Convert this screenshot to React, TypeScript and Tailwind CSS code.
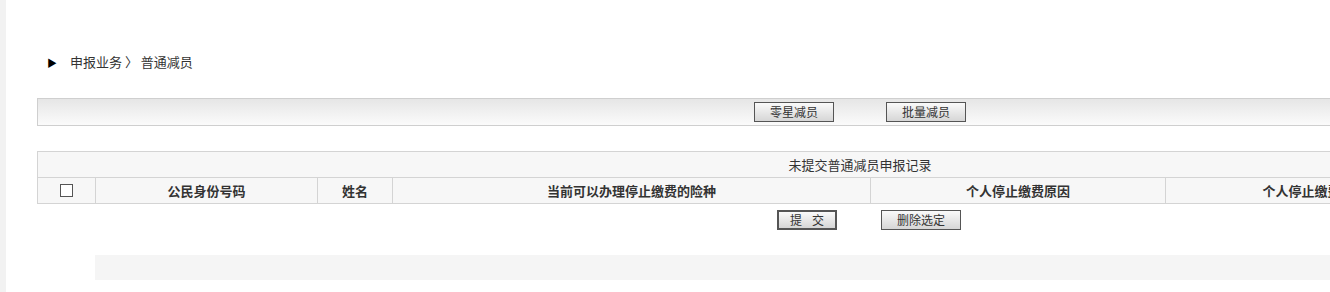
import React from 'react';

const font = { fontFamily: '"Noto Sans CJK SC", "Liberation Sans", sans-serif' };

const btn =
  'h-[20px] border border-[#555] bg-gradient-to-b from-[#fafafa] to-[#d6d6d6] text-[12px] leading-[18px] text-[#333] flex items-center justify-center';

const cols = [
  { w: 'w-[58px]', label: '' },
  { w: 'w-[222px]', label: '公民身份号码' },
  { w: 'w-[75px]', label: '姓名' },
  { w: 'w-[478px]', label: '当前可以办理停止缴费的险种' },
  { w: 'w-[295px]', label: '个人停止缴费原因' },
  { w: 'w-[298px]', label: '个人停止缴费日期' },
  { w: 'w-[220px]', label: '操作' },
];

export default function App() {
  return (
    <div className="flex h-[292px] w-[1330px] overflow-hidden bg-white text-[#333]" style={font}>
      <div className="w-[6px] shrink-0 bg-[#f2f2f2]" />
      <div className="min-w-0 flex-1 pl-[31px]">
        <div className="w-[1646px]">
          {/* breadcrumb */}
          <div className="mt-[52px] flex h-[20px] items-center text-[13px]">
            <span className="ml-[10px] text-[10px] text-black">▶</span>
            <span className="ml-[13px]">申报业务 〉 普通减员</span>
          </div>

          {/* toolbar */}
          <div className="mt-[26px] flex h-[28px] items-center justify-center gap-[52px] border border-[#cfcfcf] bg-gradient-to-b from-[#e6e6e6] to-[#fbfbfb]">
            <button className={`${btn} w-[80px]`}>零星减员</button>
            <button className={`${btn} w-[80px]`}>批量减员</button>
          </div>

          {/* table */}
          <div className="mt-[25px] border border-[#d4d4d4] bg-[#f7f7f7] text-[13px]">
            <div className="flex h-[25px] items-center justify-center">未提交普通减员申报记录</div>
            <div className="flex h-[26px] border-t border-[#d4d4d4]">
              {cols.map((c, i) => (
                <div
                  key={i}
                  className={`${c.w} flex shrink-0 items-center justify-center font-bold ${
                    i < cols.length - 1 ? 'border-r border-[#d4d4d4]' : ''
                  }`}
                >
                  {i === 0 ? (
                    <span className="h-[13px] w-[13px] border border-[#555] bg-white" />
                  ) : (
                    c.label
                  )}
                </div>
              ))}
            </div>
          </div>

          <div className="mt-[6px] flex items-center justify-center gap-[44px] pl-[18px]">
            <button className={`${btn} w-[60px] border-2 border-[#222] pl-[10px] tracking-[10px]`}>提交</button>
            <button className={`${btn} w-[80px]`}>删除选定</button>
          </div>

          <div className="ml-[58px] mt-[25px] h-[25px] bg-[#f5f5f5]" />
        </div>
      </div>
    </div>
  );
}
